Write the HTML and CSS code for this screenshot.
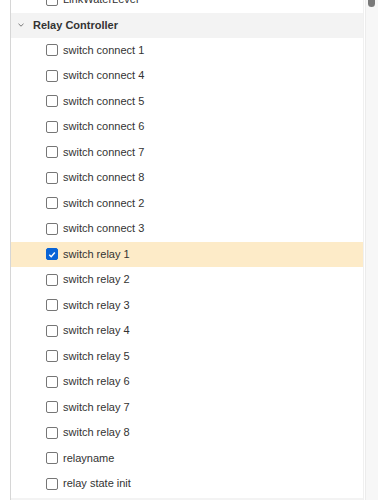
FILE: index.html
```html
<!DOCTYPE html>
<html>
<head>
<meta charset="utf-8">
<link rel="stylesheet" href="styles.css">
</head>
<body>
<div class="wrap">
  <div class="panel">
    <div class="item partial"><span class="cb"></span><span class="lbl">LinkWaterLevel</span></div>
    <div class="group">
      <svg class="chev" width="8" height="6" viewBox="0 0 8 6"><path d="M1.5 1.8 L4 4.2 L6.5 1.8" fill="none" stroke="#777" stroke-width="1"/></svg>
      <span class="gname">Relay Controller</span>
    </div>
    <div class="item"><span class="cb"></span><span class="lbl">switch connect 1</span></div>
    <div class="item"><span class="cb"></span><span class="lbl">switch connect 4</span></div>
    <div class="item"><span class="cb"></span><span class="lbl">switch connect 5</span></div>
    <div class="item"><span class="cb"></span><span class="lbl">switch connect 6</span></div>
    <div class="item"><span class="cb"></span><span class="lbl">switch connect 7</span></div>
    <div class="item"><span class="cb"></span><span class="lbl">switch connect 8</span></div>
    <div class="item"><span class="cb"></span><span class="lbl">switch connect 2</span></div>
    <div class="item"><span class="cb"></span><span class="lbl">switch connect 3</span></div>
    <div class="item selected"><span class="cb checked"><svg width="11" height="11" viewBox="0 0 11 11"><path d="M2.5 5.8 L4.6 7.9 L8.6 3.3" fill="none" stroke="#fff" stroke-width="1.6"/></svg></span><span class="lbl">switch relay 1</span></div>
    <div class="item"><span class="cb"></span><span class="lbl">switch relay 2</span></div>
    <div class="item"><span class="cb"></span><span class="lbl">switch relay 3</span></div>
    <div class="item"><span class="cb"></span><span class="lbl">switch relay 4</span></div>
    <div class="item"><span class="cb"></span><span class="lbl">switch relay 5</span></div>
    <div class="item"><span class="cb"></span><span class="lbl">switch relay 6</span></div>
    <div class="item"><span class="cb"></span><span class="lbl">switch relay 7</span></div>
    <div class="item"><span class="cb"></span><span class="lbl">switch relay 8</span></div>
    <div class="item"><span class="cb"></span><span class="lbl">relayname</span></div>
    <div class="item"><span class="cb"></span><span class="lbl">relay state init</span></div>
    <div class="group next"></div>
  </div>
  <div class="scroll"><div class="thumb"></div></div>
</div>
</body>
</html>
```
FILE: styles.css
```css
html, body {
  margin: 0;
  padding: 0;
  background: #fff;
  overflow: hidden;
}
body {
  font-family: "Liberation Sans", Arial, sans-serif;
  color: #333;
}
.wrap {
  display: flex;
  height: 500px;
  overflow: hidden;
}
.panel {
  margin-left: 10px;
  width: 354px;
  border-left: 1px solid #d6d6d6;
  border-right: 1px solid #f0f0f0;
  display: flex;
  flex-direction: column;
  margin-top: -13px;
}
.item {
  height: 25.5px;
  display: flex;
  align-items: center;
  padding-left: 35px;
  font-size: 11px;
  flex: none;
}
.item.selected {
  background: #fdebc8;
}
.cb {
  width: 10px;
  height: 10px;
  border: 1px solid #767676;
  border-radius: 2px;
  background: #fff;
  margin-right: 5px;
  flex: none;
  display: flex;
  align-items: center;
  justify-content: center;
}
.cb.checked {
  background: #0a64d6;
  border-color: #0a64d6;
}
.cb.checked svg {
  display: block;
}
.lbl {
  line-height: 1;
}
.group {
  height: 25px;
  background: #f3f3f3;
  display: flex;
  align-items: center;
  flex: none;
}
.chev {
  margin-left: 6px;
  margin-right: 8px;
}
.gname {
  font-weight: bold;
  font-size: 11px;
  color: #333;
}
.group.next {
  margin-top: 1px;
}
.scroll {
  width: 12px;
  margin-left: 1px;
  background: #f7f7f7;
  border-left: 1px solid #ececec;
  position: relative;
  flex: none;
}
.thumb {
  position: absolute;
  left: 2px;
  top: -4px;
  width: 7px;
  height: 11px;
  border-radius: 4px;
  background: #7a7a7a;
}
```
